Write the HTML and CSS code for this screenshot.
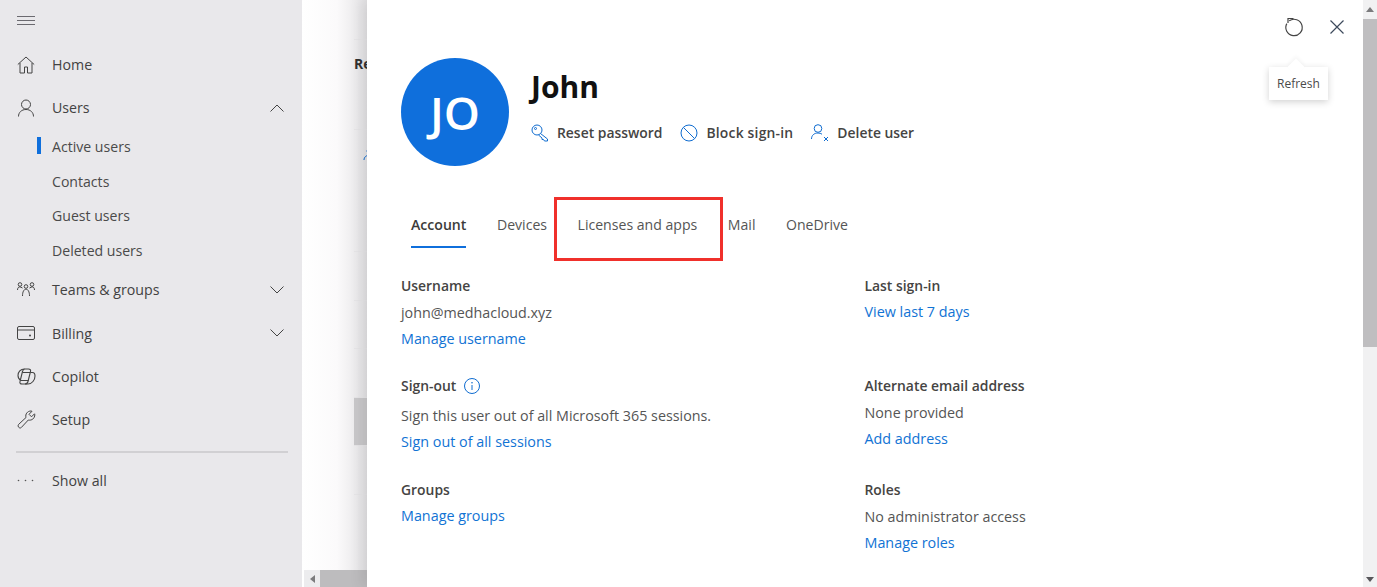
FILE: index.html
```html
<!DOCTYPE html>
<html lang="en">
<head>
    <meta charset="UTF-8">
    <title>Active users</title>
    <link rel="stylesheet" href="styles.css">
</head>
<body>
    <div class="app">
        <nav class="sidebar">
            <div class="menu-btn">
                <svg width="18" height="10" viewBox="0 0 18 10"><path d="M0 .5h18M0 4.500h18M0 8.500h18" stroke="#6b6a70" fill="none"/></svg>
            </div>
            <a class="nav-item">
                <span class="nav-icon"><svg width="18" height="18" viewBox="0 0 18 18"><path d="M.8 8.500 9 1l8.200 7.500M3 7v10h4.500v-6h3v6H15V7" stroke="#444" fill="none"/></svg></span>
                <span class="nav-text">Home</span>
            </a>
            <a class="nav-item">
                <span class="nav-icon"><svg width="18" height="18" viewBox="0 0 18 18"><circle cx="9" cy="5.500" r="4.500" stroke="#444" fill="none"/><path d="M1.500 17.500c0-4 3-7 7.500-7s7.500 3 7.500 7" stroke="#444" fill="none"/></svg></span>
                <span class="nav-text">Users</span>
                <svg class="chev" width="14" height="8" viewBox="0 0 14 8"><path d="M.5 7.500 7 1l6.500 6.500" stroke="#444" fill="none"/></svg>
            </a>
            <div class="sub-list">
                <a class="sub-item active">Active users</a>
                <a class="sub-item">Contacts</a>
                <a class="sub-item">Guest users</a>
                <a class="sub-item">Deleted users</a>
            </div>
            <a class="nav-item">
                <span class="nav-icon"><svg width="18" height="15" viewBox="0 0 18 15"><g stroke="#444" fill="none"><circle cx="3" cy="2.500" r="1.800"/><circle cx="9" cy="4.500" r="1.800"/><circle cx="15" cy="2.500" r="1.800"/><path d="M.5 8c0-2 1-3.200 2.500-3.200l2.500 1.200M17.500 8c0-2-1-3.200-2.500-3.200L12.500 6M5.500 14c0-4 1.300-6.800 3.500-6.800s3.500 2.800 3.500 6.800"/></g></svg></span>
                <span class="nav-text">Teams &amp; groups</span>
                <svg class="chev" width="14" height="8" viewBox="0 0 14 8"><path d="M.5.5 7 7 13.500.5" stroke="#444" fill="none"/></svg>
            </a>
            <a class="nav-item">
                <span class="nav-icon"><svg width="18" height="14" viewBox="0 0 18 14"><rect x=".5" y=".5" width="17" height="13" rx="1.500" stroke="#444" fill="none"/><path d="M.5 4h17" stroke="#444"/><circle cx="13" cy="9.500" r="1" fill="#444"/></svg></span>
                <span class="nav-text">Billing</span>
                <svg class="chev" width="14" height="8" viewBox="0 0 14 8"><path d="M.5.5 7 7 13.500.5" stroke="#444" fill="none"/></svg>
            </a>
            <a class="nav-item">
                <span class="nav-icon"><svg width="19" height="17" viewBox="0 0 19 17"><g stroke="#444" fill="none" stroke-width="1.100"><path d="M7.500 1C3.500 1 1 4 1 7.500 1 10 2 11.500 4 12.300"/><path d="M13.500 4.500h2C17 4.500 18 6 18 8c0 4-3 8-7 8H8"/><path d="M7.500 1h4c1.500 0 2.500 1 2 2.500l-2.500 10c-.4 1.500-1.500 2.500-3 2.500h-3c-1.700 0-2.500-1-2-2.500l2.500-10C6 2 6.500 1 7.500 1Z"/><path d="M5.500 4.500h8M3.800 12.500h7.700"/></g></svg></span>
                <span class="nav-text">Copilot</span>
            </a>
            <a class="nav-item">
                <span class="nav-icon"><svg width="19" height="19" viewBox="0 0 19 19"><path d="M1.500 14.500 9 7.500C8 4 10.500 1 14 1l1 .3-3 3 2.500 2.500 3-3 .3 1c0 3.500-3 6-6.500 5.200l-7 7.500c-1.500 1.500-4.300-.8-2.800-3Z" stroke="#444" fill="none"/></svg></span>
                <span class="nav-text">Setup</span>
            </a>
            <div class="nav-rule"></div>
            <a class="nav-item show-all">
                <span class="nav-icon dots"><svg width="17" height="3" viewBox="0 0 17 3"><circle cx="1.500" cy="1.500" r=".8" fill="#555"/><circle cx="8.500" cy="1.500" r=".8" fill="#555"/><circle cx="15.500" cy="1.500" r=".8" fill="#555"/></svg></span>
                <span class="nav-text">Show all</span>
            </a>
        </nav>

        <!-- page behind the panel, mostly hidden -->
        <div class="backdrop">
            <div class="back-rows">
                <div class="back-row back-head">Re</div>
                <div class="back-row back-user">
                    <svg width="14" height="14" viewBox="0 0 14 14"><circle cx="7" cy="4" r="3" stroke="#0f6cd0" fill="none"/><path d="M1 13c0-3 2.500-5 6-5s6 2 6 5" stroke="#0f6cd0" fill="none"/></svg>
                </div>
                <div class="back-row"></div>
                <div class="back-row"></div>
                <div class="back-row"></div>
                <div class="back-row back-selected"></div>
                <div class="back-row"></div>
                <div class="back-row"></div>
            </div>
            <div class="back-scroll">
                <span class="back-arrow"></span>
                <span class="back-thumb"></span>
            </div>
        </div>

        <section class="panel">
            <div class="panel-actions">
                <svg width="20" height="20" viewBox="0 0 20 20"><path d="M2.800 6.600A8.200 8.200 0 1 0 5.200 3.850" stroke="#444" fill="none" stroke-width="1.200"/><path d="M4 6V1.500h5.500" stroke="#444" fill="none" stroke-width="1.200"/></svg>
                <svg width="14" height="14" viewBox="0 0 14 14"><path d="m.5.500 13 13M13.500.500l-13 13" stroke="#3d4a5c" fill="none" stroke-width="1.200"/></svg>
            </div>
            <div class="tooltip">Refresh</div>

            <header class="user-head">
                <div class="avatar">JO</div>
                <div class="user-main">
                    <h1>John</h1>
                    <div class="user-actions">
                        <a class="action">
                            <svg width="18" height="18" viewBox="0 0 18 18"><g stroke="#0f6cd0" fill="none"><circle cx="6" cy="6" r="5"/><circle cx="4.500" cy="4.500" r="1"/><path d="m9.500 9.500 7 5.500v2h-3l-1-1.500h-1.500v-1.500l-3.500-3"/></g></svg>
                            <span>Reset password</span>
                        </a>
                        <a class="action action-wide">
                            <svg width="18" height="18" viewBox="0 0 18 18"><circle cx="9" cy="9" r="8" stroke="#0f6cd0" fill="none"/><path d="m3.500 3.500 11 11" stroke="#0f6cd0"/></svg>
                            <span>Block sign-in</span>
                        </a>
                        <a class="action">
                            <svg width="18" height="18" viewBox="0 0 18 18"><g stroke="#0f6cd0" fill="none"><circle cx="7" cy="4.500" r="3.800"/><path d="M.5 15c0-3.500 2.500-6 6.500-6 1.500 0 3 .4 4 1.200M13 13l4 4M17 13l-4 4"/></g></svg>
                            <span>Delete user</span>
                        </a>
                    </div>
                </div>
            </header>

            <div class="tabs">
                <a class="tab selected">Account</a>
                <a class="tab">Devices</a>
                <a class="tab">Licenses and apps</a>
                <a class="tab">Mail</a>
                <a class="tab">OneDrive</a>
                <div class="highlight"></div>
            </div>

            <div class="details">
                <div class="detail">
                    <div class="detail-label">Username</div>
                    <div class="detail-value">john@medhacloud.xyz</div>
                    <a class="detail-link">Manage username</a>
                </div>
                <div class="detail">
                    <div class="detail-label">Last sign-in</div>
                    <a class="detail-link">View last 7 days</a>
                </div>
                <div class="detail">
                    <div class="detail-label label-tall">Sign-out
                        <svg width="16" height="16" viewBox="0 0 16 16"><circle cx="8" cy="8" r="7.500" stroke="#0f6cd0" fill="none"/><path d="M8 7v5" stroke="#0f6cd0"/><circle cx="8" cy="4.700" r=".8" fill="#0f6cd0"/></svg>
                    </div>
                    <div class="detail-value">Sign this user out of all Microsoft 365 sessions.</div>
                    <a class="detail-link">Sign out of all sessions</a>
                </div>
                <div class="detail">
                    <div class="detail-label">Alternate email address</div>
                    <div class="detail-value">None provided</div>
                    <a class="detail-link">Add address</a>
                </div>
                <div class="detail">
                    <div class="detail-label">Groups</div>
                    <a class="detail-link">Manage groups</a>
                </div>
                <div class="detail">
                    <div class="detail-label">Roles</div>
                    <div class="detail-value">No administrator access</div>
                    <a class="detail-link">Manage roles</a>
                </div>
            </div>

            <div class="panel-scroll">
                <span class="scroll-up"></span>
                <span class="scroll-thumb"></span>
                <span class="scroll-down"></span>
            </div>
        </section>
    </div>
</body>
</html>
```

FILE: styles.css
```css
html, body {
    margin: 0;
    height: 100%;
    overflow: hidden;
}
body {
    font-family: "Open Sans", "Noto Sans", Arial, sans-serif;
    font-size: 14px;
    color: #323130;
    background-color: #fff;
}
.app {
    display: flex;
    height: 587px;
}

/* left nav */
.sidebar {
    width: 302px;
    flex: none;
    background-color: #e9e8eb;
    padding: 16px 14px 0 17px;
    box-sizing: border-box;
}
.menu-btn {
    height: 10px;
    margin-bottom: 17px;
    display: flex;
}
.nav-item {
    display: flex;
    align-items: center;
    height: 43.200px;
    color: #424242;
}
.nav-icon {
    width: 35px;
    flex: none;
    display: flex;
    align-items: center;
}
.nav-text {
    flex: 1;
    font-size: 14.200px;
}
.chev {
    margin-right: 4px;
}
.sub-list {
    padding-top: 1px;
}
.sub-item {
    display: block;
    height: 34.500px;
    line-height: 34.500px;
    padding-left: 35px;
    position: relative;
    color: #4a4a4a;
    font-size: 14.100px;
}
.sub-item.active::before {
    content: "";
    position: absolute;
    left: 20px;
    top: 7px;
    width: 4px;
    height: 17px;
    background-color: #0f6fdc;
}
.nav-rule {
    height: 2px;
    background-color: #d1d0d3;
    margin: 10px 0 5px -1px;
}
.show-all {
    height: 44px;
}

/* page under the panel */
.backdrop {
    flex: 1;
    position: relative;
    background: linear-gradient(to right, #fff 0, #fbfafb 35px, #e3e2e4 65px);
}
.back-rows {
    padding: 39px 0 0 52px;
}
.back-row {
    height: 48.500px;
    border-top: 1px solid #e6e5e7;
    box-sizing: border-box;
}
.back-head {
    height: 90px;
    padding-top: 14px;
    font-weight: 700;
    font-size: 14px;
}
.back-user {
    padding: 16px 0 0 9px;
    height: 122px;
}
.back-selected {
    background-color: #c9c8ca;
}
.back-scroll {
    position: absolute;
    left: 2px;
    right: 0;
    bottom: 0;
    height: 17px;
    background-color: #ececee;
    display: flex;
    align-items: center;
}
.back-arrow {
    margin-left: 6px;
    border-style: solid;
    border-width: 4px 5px 4px 0;
    border-color: transparent #7b7b7d transparent transparent;
}
.back-thumb {
    margin-left: 5px;
    flex: 1;
    height: 100%;
    background-color: #bdbcbe;
}

/* user panel */
.panel {
    position: absolute;
    left: 367px;
    top: 0;
    right: 0;
    bottom: 0;
    background-color: #fff;
    padding: 58px 0 0 34px;
    box-shadow: -6px 0 12px rgba(0,0,0,0.08);
}
.panel-actions {
    position: absolute;
    top: 17px;
    right: 33px;
    display: flex;
    align-items: center;
    gap: 26px;
}
.tooltip {
    position: absolute;
    top: 67px;
    left: 902px;
    padding: 8px;
    line-height: 17px;
    font-size: 12px;
    color: #4a4a4a;
    background-color: #fff;
    box-shadow: 0 2px 7px rgba(0,0,0,0.18);
}
.tooltip::before {
    content: "";
    position: absolute;
    top: -6px;
    left: 21px;
    width: 12px;
    height: 12px;
    background-color: #fff;
    transform: rotate(45deg);
    box-shadow: -2px -2px 4px rgba(0,0,0,0.04);
}
.user-head {
    display: flex;
    gap: 22px;
}
.avatar {
    width: 108px;
    height: 108px;
    border-radius: 50%;
    background-color: #0f6fdc;
    color: #fff;
    font-size: 46px;
    font-weight: 600;
    display: flex;
    align-items: center;
    justify-content: center;
}
.user-main h1 {
    margin: 7px 0 0;
    font-size: 30px;
    line-height: 44px;
    font-weight: 700;
    color: #111;
}
.user-actions {
    display: flex;
    gap: 18px;
    margin-top: 14px;
}
.action {
    display: flex;
    align-items: center;
    gap: 8px;
    font-size: 13.900px;
    font-weight: 600;
    color: #454443;
}
.action-wide span {
    letter-spacing: .2px;
}
.tabs {
    display: flex;
    position: relative;
    margin-top: 36px;
    padding-left: 10px;
    height: 46px;
    gap: 30.500px;
}
.tab {
    line-height: 46px;
    font-size: 14.100px;
    color: #555;
    box-sizing: border-box;
}
.tab.selected {
    font-weight: 600;
    color: #3c3b3a;
    border-bottom: 2px solid #0f6fdc;
}
.highlight {
    position: absolute;
    left: 153px;
    top: -5px;
    width: 169px;
    height: 64px;
    border: 3px solid #f0302b;
    box-sizing: border-box;
}
.details {
    display: grid;
    grid-template-columns: 463.500px 1fr;
    grid-template-rows: 100px 104px auto;
    margin-top: 25px;
}
.detail-label {
    display: flex;
    align-items: center;
    gap: 8px;
    height: 26px;
    padding-bottom: 1px;
    box-sizing: border-box;
    font-size: 13.900px;
    font-weight: 600;
    color: #454443;
}
.label-tall {
    margin-bottom: 3px;
}
.detail-value {
    height: 27px;
    line-height: 27px;
    font-size: 14.300px;
    color: #555;
}
.detail-link {
    display: block;
    height: 26px;
    line-height: 26px;
    font-size: 14.350px;
    color: #1173d4;
}
.panel-scroll {
    position: absolute;
    top: 0;
    right: 0;
    bottom: 0;
    width: 14px;
    background-color: #f1f1f2;
}
.scroll-up {
    display: block;
    margin: 7px auto 0;
    width: 0;
    border-style: solid;
    border-width: 0 4px 5px;
    border-color: transparent transparent #7b7b7d;
}
.scroll-thumb {
    position: absolute;
    top: 19px;
    left: 0;
    right: 0;
    height: 328px;
    background-color: #bfbec0;
}
.scroll-down {
    position: absolute;
    bottom: 5px;
    left: 3px;
    border-style: solid;
    border-width: 5px 4px 0;
    border-color: #57565a transparent transparent;
}
```
